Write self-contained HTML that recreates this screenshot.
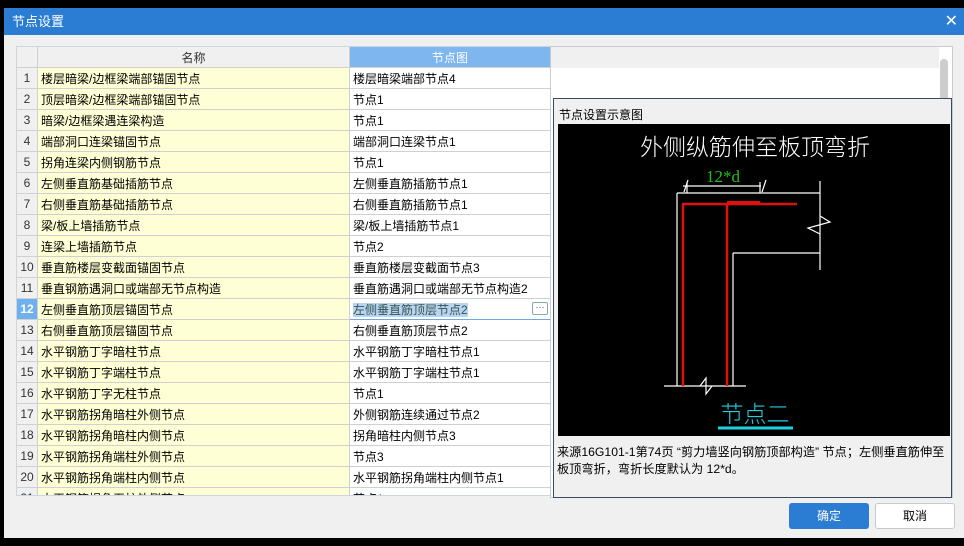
<!DOCTYPE html>
<html><head><meta charset="utf-8"><style>
*{margin:0;padding:0;box-sizing:border-box}
body{width:964px;height:546px;background:#000;position:relative;overflow:hidden;font-family:"Liberation Sans","Noto Sans CJK SC",sans-serif;font-size:12px;color:#000}
.dlg{position:absolute;left:4px;top:8px;width:960px;height:530px;background:#f0f0f0}
.title{position:absolute;left:0;top:0;width:960px;height:27px;background:#2b7cd3;color:#fff;font-size:13px;line-height:27px;padding-left:8px}
.close{position:absolute;right:6px;top:0;color:#fff;font-size:16px;line-height:27px}
table{position:absolute;left:12px;top:38px;border-collapse:collapse;table-layout:fixed;width:535px}
td{height:21px;border:1px solid #d0d0d0;padding:0 3px;white-space:nowrap;overflow:hidden;font-size:12px}
.n{width:21px;background:#f0f0f0;color:#333;text-align:center;padding:0}
.a{width:312px;background:#ffffd5}
.b{background:#fff}
.h td{background:#f0f0f0;text-align:center;color:#333}
.h td.hb{background:#7eb6f0;color:#fff}
.wrap{position:absolute;left:12px;top:38px;width:536px;height:450px;overflow:hidden;border:1px solid #cfd5dc}
.rp{position:absolute;left:546px;top:38px;width:403px;height:452px;background:#fff;border:1px solid #c8ccd2}
</style></head><body>
<div class="dlg">
<div class="title">节点设置<span class="close">✕</span></div>
<div class="wrap"><table style="left:-1px;top:-1px">
<tr class="h"><td class="n"></td><td class="a">名称</td><td class="hb">节点图</td></tr>
<tr><td class="n">1</td><td class="a">楼层暗梁/边框梁端部锚固节点</td><td class="b">楼层暗梁端部节点4</td></tr>
<tr><td class="n">2</td><td class="a">顶层暗梁/边框梁端部锚固节点</td><td class="b">节点1</td></tr>
<tr><td class="n">3</td><td class="a">暗梁/边框梁遇连梁构造</td><td class="b">节点1</td></tr>
<tr><td class="n">4</td><td class="a">端部洞口连梁锚固节点</td><td class="b">端部洞口连梁节点1</td></tr>
<tr><td class="n">5</td><td class="a">拐角连梁内侧钢筋节点</td><td class="b">节点1</td></tr>
<tr><td class="n">6</td><td class="a">左侧垂直筋基础插筋节点</td><td class="b">左侧垂直筋插筋节点1</td></tr>
<tr><td class="n">7</td><td class="a">右侧垂直筋基础插筋节点</td><td class="b">右侧垂直筋插筋节点1</td></tr>
<tr><td class="n">8</td><td class="a">梁/板上墙插筋节点</td><td class="b">梁/板上墙插筋节点1</td></tr>
<tr><td class="n">9</td><td class="a">连梁上墙插筋节点</td><td class="b">节点2</td></tr>
<tr><td class="n">10</td><td class="a">垂直筋楼层变截面锚固节点</td><td class="b">垂直筋楼层变截面节点3</td></tr>
<tr><td class="n">11</td><td class="a">垂直钢筋遇洞口或端部无节点构造</td><td class="b">垂直筋遇洞口或端部无节点构造2</td></tr>
<tr><td class="n" style="background:#6fb0f0;color:#fff;font-weight:bold">12</td><td class="a">左侧垂直筋顶层锚固节点</td><td class="b" style="border:1px solid #6fa8e0;position:relative"><span style="background:#b8d4ee;color:#355">左侧垂直筋顶层节点2</span><span style="position:absolute;right:2px;top:3px;width:16px;height:13px;border:1px solid #8aa;border-radius:2px;font-size:9px;line-height:9px;text-align:center;color:#456">···</span></td></tr>
<tr><td class="n">13</td><td class="a">右侧垂直筋顶层锚固节点</td><td class="b">右侧垂直筋顶层节点2</td></tr>
<tr><td class="n">14</td><td class="a">水平钢筋丁字暗柱节点</td><td class="b">水平钢筋丁字暗柱节点1</td></tr>
<tr><td class="n">15</td><td class="a">水平钢筋丁字端柱节点</td><td class="b">水平钢筋丁字端柱节点1</td></tr>
<tr><td class="n">16</td><td class="a">水平钢筋丁字无柱节点</td><td class="b">节点1</td></tr>
<tr><td class="n">17</td><td class="a">水平钢筋拐角暗柱外侧节点</td><td class="b">外侧钢筋连续通过节点2</td></tr>
<tr><td class="n">18</td><td class="a">水平钢筋拐角暗柱内侧节点</td><td class="b">拐角暗柱内侧节点3</td></tr>
<tr><td class="n">19</td><td class="a">水平钢筋拐角端柱外侧节点</td><td class="b">节点3</td></tr>
<tr><td class="n">20</td><td class="a">水平钢筋拐角端柱内侧节点</td><td class="b">水平钢筋拐角端柱内侧节点1</td></tr>
<tr><td class="n">21</td><td class="a">水平钢筋拐角无柱外侧节点</td><td class="b">节点1</td></tr>
</table></div>
<div class="rp">
<div style="position:absolute;left:0;top:0;width:388px;height:21px;background:#f0f0f0"></div>
<div style="position:absolute;left:389px;top:12px;width:8px;height:44px;background:#cdcdcd;border-radius:4px"></div>
</div>
<div style="position:absolute;left:549px;top:90px;width:399px;height:400px;background:#f0f0f0;border:1px solid #3c4a60">
<div style="position:absolute;left:5px;top:7px;font-size:12px">节点设置示意图</div>
<div style="position:absolute;left:4px;top:25px;width:392px;height:312px;background:#000">
<svg width="392" height="312" style="position:absolute;left:0;top:0">
<text x="197" y="31" fill="#fff" font-size="23" text-anchor="middle" font-family="Noto Sans CJK SC,sans-serif" font-weight="300">外侧纵筋伸至板顶弯折</text>
<text x="165" y="58" fill="#1fc01f" font-size="17" text-anchor="middle" font-family="Liberation Serif,serif">12*d</text>
<g stroke="#fff" stroke-width="1.2" fill="none">
<line x1="125" y1="62" x2="203" y2="62"/>
<line x1="130" y1="56" x2="126" y2="68"/><line x1="208" y1="56" x2="204" y2="68"/>
<line x1="129" y1="58" x2="129" y2="69"/><line x1="202" y1="58" x2="202" y2="69"/>
<line x1="119" y1="69" x2="262" y2="69"/>
<line x1="262" y1="57" x2="262" y2="146"/>
<polyline points="262,92 272,98 250,104 262,110"/>
<line x1="119" y1="69" x2="119" y2="262"/>
<line x1="175" y1="129" x2="175" y2="262"/>
<line x1="175" y1="129" x2="262" y2="129"/>
<line x1="106" y1="262" x2="188" y2="262"/>
<polyline points="142,262 148,254 148,270 154,262"/>
</g>
<g stroke="#e01010" stroke-width="2.5" fill="none">
<line x1="125" y1="80" x2="125" y2="262"/>
<line x1="169" y1="80" x2="169" y2="262"/>
<line x1="124" y1="80" x2="239" y2="80"/>
<line x1="169" y1="79" x2="202" y2="79" stroke-width="4"/>
</g>
<text x="197" y="298" fill="#1fd0e0" font-size="23" text-anchor="middle" font-family="Noto Sans CJK SC,sans-serif" font-weight="300">节点二</text>
<line x1="160" y1="304" x2="235" y2="304" stroke="#1fd0e0" stroke-width="3"/>
</svg>
</div>
<div style="position:absolute;left:3px;top:345px;font-size:12.2px;line-height:17px;width:400px;white-space:nowrap">来源16G101-1第74页 “剪力墙竖向钢筋顶部构造” 节点；左侧垂直筋伸至<br>板顶弯折，弯折长度默认为 12*d。</div>
</div>
<div style="position:absolute;left:785px;top:495px;width:80px;height:26px;background:#2b7cd3;border-radius:3px;color:#fff;text-align:center;line-height:26px">确定</div>
<div style="position:absolute;left:871px;top:495px;width:80px;height:26px;background:#fff;border:1px solid #c8c8c8;border-radius:3px;text-align:center;line-height:24px">取消</div>
</div>
</body></html>
